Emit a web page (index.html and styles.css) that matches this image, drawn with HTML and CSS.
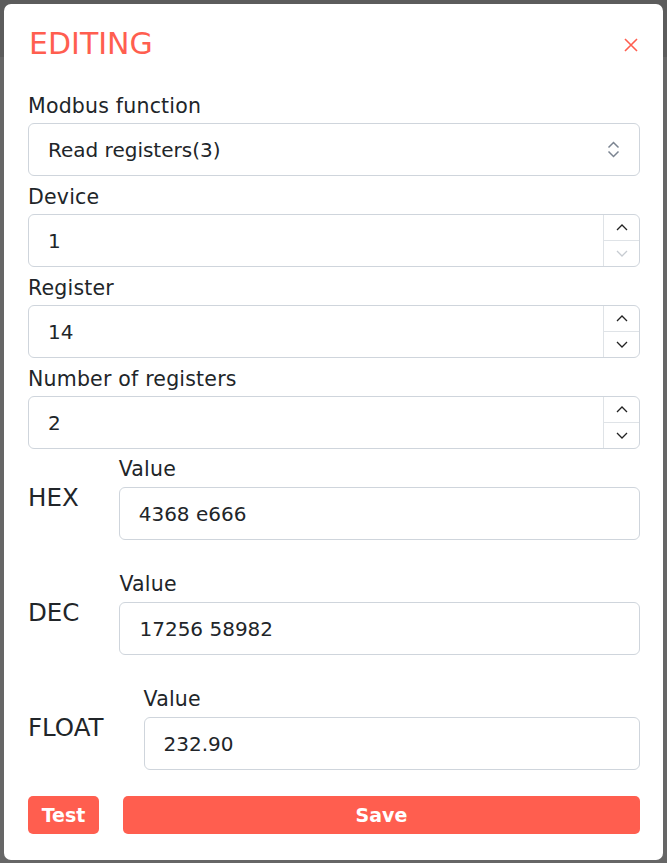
FILE: index.html
```html
<!DOCTYPE html>
<html lang="en">
<head>
<meta charset="utf-8">
<title>Editing</title>
<link rel="stylesheet" href="styles.css">
</head>
<body>
<div class="backdrop">
  <div class="modal">
    <div class="modal-header">
      <h1 class="title">EDITING</h1>
      <button class="close" aria-label="Close">
        <svg width="14" height="14" viewBox="0 0 14 14"><path d="M1 1 L13 13 M13 1 L1 13" stroke="#ff5e4f" stroke-width="1.6" fill="none"/></svg>
      </button>
    </div>

    <div class="field">
      <div class="label">Modbus function</div>
      <div class="control select">
        <span class="val">Read registers(3)</span>
        <svg class="updown" width="13" height="17" viewBox="0 0 13 17"><path d="M1.5 6.5 L6.5 1.5 L11.5 6.5 M1.5 10.5 L6.5 15.5 L11.5 10.5" stroke="#7b8491" stroke-width="1.5" fill="none"/></svg>
      </div>
    </div>

    <div class="field">
      <div class="label">Device</div>
      <div class="control number">
        <span class="val">1</span>
        <div class="spin">
          <div class="spin-btn"><svg width="12" height="7" viewBox="0 0 12 7"><path d="M1 6 L6 1 L11 6" stroke="#222" stroke-width="1.3" fill="none"/></svg></div>
          <div class="spin-btn"><svg width="12" height="7" viewBox="0 0 12 7"><path d="M1 1 L6 6 L11 1" stroke="#c6cbd1" stroke-width="1.3" fill="none"/></svg></div>
        </div>
      </div>
    </div>

    <div class="field">
      <div class="label">Register</div>
      <div class="control number">
        <span class="val">14</span>
        <div class="spin">
          <div class="spin-btn"><svg width="12" height="7" viewBox="0 0 12 7"><path d="M1 6 L6 1 L11 6" stroke="#222" stroke-width="1.3" fill="none"/></svg></div>
          <div class="spin-btn"><svg width="12" height="7" viewBox="0 0 12 7"><path d="M1 1 L6 6 L11 1" stroke="#222" stroke-width="1.3" fill="none"/></svg></div>
        </div>
      </div>
    </div>

    <div class="field">
      <div class="label">Number of registers</div>
      <div class="control number">
        <span class="val">2</span>
        <div class="spin">
          <div class="spin-btn"><svg width="12" height="7" viewBox="0 0 12 7"><path d="M1 6 L6 1 L11 6" stroke="#222" stroke-width="1.3" fill="none"/></svg></div>
          <div class="spin-btn"><svg width="12" height="7" viewBox="0 0 12 7"><path d="M1 1 L6 6 L11 1" stroke="#222" stroke-width="1.3" fill="none"/></svg></div>
        </div>
      </div>
    </div>

    <div class="convs">
      <div class="conv">
        <div class="conv-name">HEX</div>
        <div class="conv-field">
          <div class="label tight">Value</div>
          <div class="control"><span class="val">4368 e666</span></div>
        </div>
      </div>
      <div class="conv">
        <div class="conv-name">DEC</div>
        <div class="conv-field">
          <div class="label tight">Value</div>
          <div class="control"><span class="val">17256 58982</span></div>
        </div>
      </div>
      <div class="conv">
        <div class="conv-name">FLOAT</div>
        <div class="conv-field">
          <div class="label tight">Value</div>
          <div class="control"><span class="val">232.90</span></div>
        </div>
      </div>
    </div>

    <div class="actions">
      <button class="btn btn-test">Test</button>
      <button class="btn btn-save">Save</button>
    </div>
  </div>
</div>
</body>
</html>
```

FILE: styles.css
```css
* { box-sizing: border-box; }

html, body {
  margin: 0;
  padding: 0;
}

body {
  font-family: "DejaVu Sans", sans-serif;
  color: #212529;
  background: linear-gradient(to bottom, #5c5c5c 0, #5c5c5c 57px, #666666 57px, #666666 100%);
  min-height: 863px;
}

.backdrop {
  padding: 4px;
}

.modal {
  width: 659px;
  background: #ffffff;
  border-radius: 7px;
  padding: 22px 23px 26px 24px;
}

.modal-header {
  display: flex;
  justify-content: space-between;
  align-items: center;
  margin-bottom: 30px;
}

.title {
  margin: 0 0 0 1px;
  font-size: 30px;
  line-height: 36px;
  font-weight: 400;
  color: #ff5e4f;
}

.close {
  border: 0;
  background: none;
  padding: 0;
  margin: 2px 2px 0 0;
  width: 14px;
  height: 14px;
  display: flex;
}

.field {
  margin-top: 7px;
}

.label {
  font-size: 20.5px;
  line-height: 28px;
  margin-bottom: 3px;
  letter-spacing: 0.2px;
}

.label.tight {
  margin-bottom: 4px;
}

.control {
  height: 53px;
  border: 1px solid #cfd5dc;
  border-radius: 6px;
  display: flex;
  align-items: center;
  font-size: 20px;
}

.val {
  flex: 1;
  padding-left: 19px;
}

.select .updown {
  margin-right: 19px;
}

.number {
  align-items: stretch;
}

.number .val {
  display: flex;
  align-items: center;
}

.spin {
  width: 36px;
  border-left: 1px solid #dfe3e7;
  display: flex;
  flex-direction: column;
}

.spin-btn {
  flex: 1;
  display: flex;
  align-items: center;
  justify-content: center;
}

.spin-btn + .spin-btn {
  border-top: 1px solid #dfe3e7;
}

.convs {
  margin-top: 6px;
  display: flex;
  flex-direction: column;
  gap: 30px;
}

.conv {
  display: flex;
  align-items: center;
}

.conv-name {
  font-size: 24.5px;
  line-height: 28px;
  margin-right: 40px;
}

.conv-field {
  flex: 1;
}

.actions {
  display: flex;
  gap: 24px;
  margin-top: 26px;
}

.btn {
  height: 38px;
  border: 0;
  border-radius: 5px;
  background: #ff5e4f;
  color: #ffffff;
  font-family: "DejaVu Sans", sans-serif;
  font-weight: 700;
  font-size: 19px;
  padding: 0;
}

.btn-test {
  width: 71px;
}

.btn-save {
  flex: 1;
}
```
